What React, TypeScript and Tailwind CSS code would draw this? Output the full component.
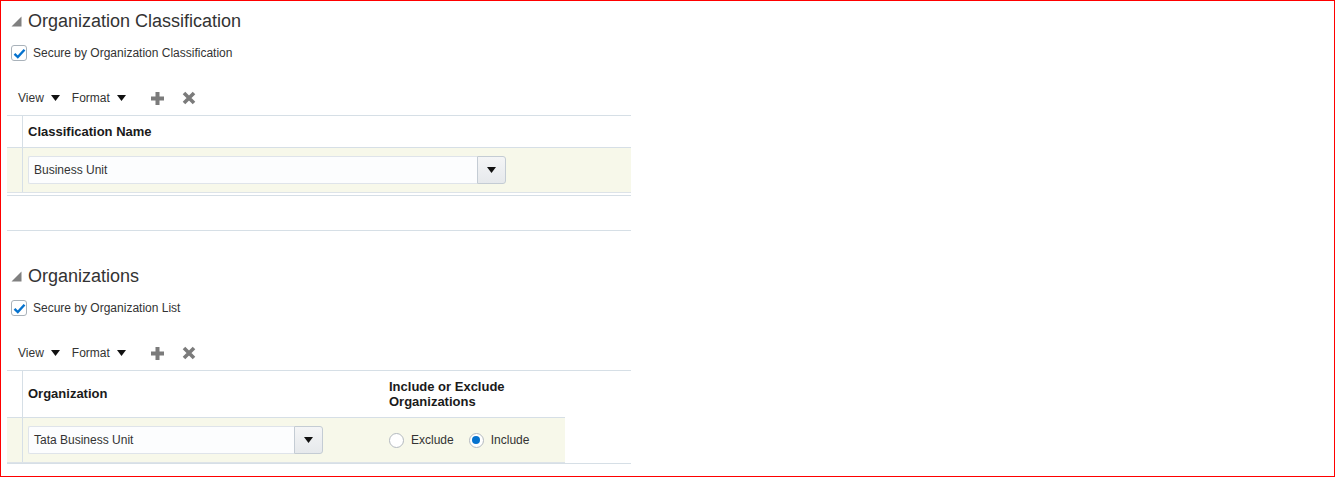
import React from 'react'

const font = { fontFamily: '"Liberation Sans", Arial, sans-serif' }

function Disclosure() {
  return (
    <svg width="11" height="11" viewBox="0 0 11 11" className="shrink-0">
      <polygon points="0.5,10.5 10.5,0.5 10.5,10.5" fill="#808080" />
    </svg>
  )
}

function Checkbox({ label }: { label: string }) {
  return (
    <div className="flex items-center gap-[6px] pl-[10px] h-[16px]">
      <span className="w-[16px] h-[16px] rounded-[3px] border border-[#a9b2ba] bg-white flex items-center justify-center">
        <svg width="13" height="11" viewBox="0 0 13 11">
          <path d="M1.5 5.8 L4.8 9 L11.5 1.8" fill="none" stroke="#0572ce" strokeWidth="2.4" />
        </svg>
      </span>
      <span className="text-[12px] text-[#333]">{label}</span>
    </div>
  )
}

function Caret() {
  return (
    <svg width="9" height="6" viewBox="0 0 9 6">
      <polygon points="0,0 9,0 4.5,6" fill="#111" />
    </svg>
  )
}

function Toolbar() {
  return (
    <div className="flex items-center h-[24px] pl-[17px] text-[12px] text-[#333]">
      <span>View</span>
      <span className="ml-[7px]"><Caret /></span>
      <span className="ml-[12px]">Format</span>
      <span className="ml-[7px]"><Caret /></span>
      <svg width="15" height="15" viewBox="0 0 15 15" className="ml-[24px]">
        <path d="M7.5 1 V14 M1 7.5 H14" stroke="#7b7b7b" strokeWidth="4" />
      </svg>
      <svg width="14" height="14" viewBox="0 0 14 14" className="ml-[17px]">
        <path d="M2 2 L12 12 M12 2 L2 12" stroke="#7b7b7b" strokeWidth="3.6" />
      </svg>
    </div>
  )
}

function Select({ value, width }: { value: string; width: string }) {
  return (
    <div className={`flex h-[28px] ${width}`}>
      <div className="flex-1 flex items-center pl-[5px] bg-[#fcfdfe] border border-[#dfe4ea] border-r-0 rounded-l-[2px] text-[12px] text-[#333]">
        {value}
      </div>
      <div className="w-[29px] flex items-center justify-center bg-gradient-to-b from-[#f4f5f6] to-[#e6e9ec] border border-[#c4ccd4] rounded-r-[3px]">
        <svg width="9" height="6" viewBox="0 0 9 6">
          <polygon points="0,0 9,0 4.5,6" fill="#111" />
        </svg>
      </div>
    </div>
  )
}

function Radio({ checked, label }: { checked?: boolean; label: string }) {
  return (
    <div className="flex items-center gap-[7px]">
      <span className="w-[15px] h-[15px] rounded-full border border-[#b3b9bf] bg-white flex items-center justify-center">
        {checked && <span className="w-[8px] h-[8px] rounded-full bg-[#0572ce]" />}
      </span>
      <span className="text-[12px] text-[#333]">{label}</span>
    </div>
  )
}

function Title({ text }: { text: string }) {
  return (
    <div className="flex items-center gap-[6px] h-[24px] pl-[10px]">
      <Disclosure />
      <span className="text-[18px] text-[#333]">{text}</span>
    </div>
  )
}

export default function App() {
  return (
    <div style={font} className="w-[1335px] h-[477px] border border-[#ff0000] bg-white">
      {/* Organization Classification */}
      <div className="pt-[8px]">
        <Title text="Organization Classification" />
        <div className="mt-[12px]">
          <Checkbox label="Secure by Organization Classification" />
        </div>
        <div className="mt-[25px]">
          <Toolbar />
        </div>
        <div className="mt-[5px] ml-[6px] w-[624px] border-t border-b border-[#d6dfe6] pb-[2px]">
          <div className="flex h-[32px] border-b border-[#d6dfe6]">
            <div className="w-[16px] border-r border-[#d6dfe6]" />
            <div className="flex-1 flex items-center pl-[5px] text-[13px] font-bold text-[#1a1a1a]">Classification Name</div>
          </div>
          <div className="flex h-[45px] bg-[#f7f8ea] border-b border-[#dde3e8]">
            <div className="w-[16px] border-r border-[#d6dfe6]" />
            <div className="flex-1 pl-[5px] pt-[8px]">
              <Select value="Business Unit" width="w-[478px]" />
            </div>
          </div>
        </div>
        <div className="mt-[34px] ml-[6px] w-[624px] border-t border-[#d6dfe6]" />
      </div>

      {/* Organizations */}
      <div className="pt-[33px]">
        <Title text="Organizations" />
        <div className="mt-[12px]">
          <Checkbox label="Secure by Organization List" />
        </div>
        <div className="mt-[25px]">
          <Toolbar />
        </div>
        <div className="mt-[5px] ml-[6px] w-[624px] border-t border-b border-[#d6dfe6]">
          <div className="w-[558px]">
            <div className="flex h-[47px] border-b border-[#d6dfe6]">
              <div className="w-[16px] border-r border-[#d6dfe6]" />
              <div className="w-[360px] flex items-center pl-[5px] text-[13px] font-bold text-[#1a1a1a]">Organization</div>
              <div className="flex-1 flex items-center pl-[6px] text-[13px] font-bold text-[#1a1a1a] leading-[15px]">
                Include or Exclude<br />Organizations
              </div>
            </div>
            <div className="flex h-[45px] bg-[#f7f8ea] border-b border-[#dde3e8]">
              <div className="w-[16px] border-r border-[#d6dfe6]" />
              <div className="w-[360px] pl-[5px] pt-[8px]">
                <Select value="Tata Business Unit" width="w-[295px]" />
              </div>
              <div className="flex-1 flex items-center gap-[15px] pl-[6px]">
                <Radio label="Exclude" />
                <Radio checked label="Include" />
              </div>
            </div>
          </div>
        </div>
      </div>
    </div>
  )
}
